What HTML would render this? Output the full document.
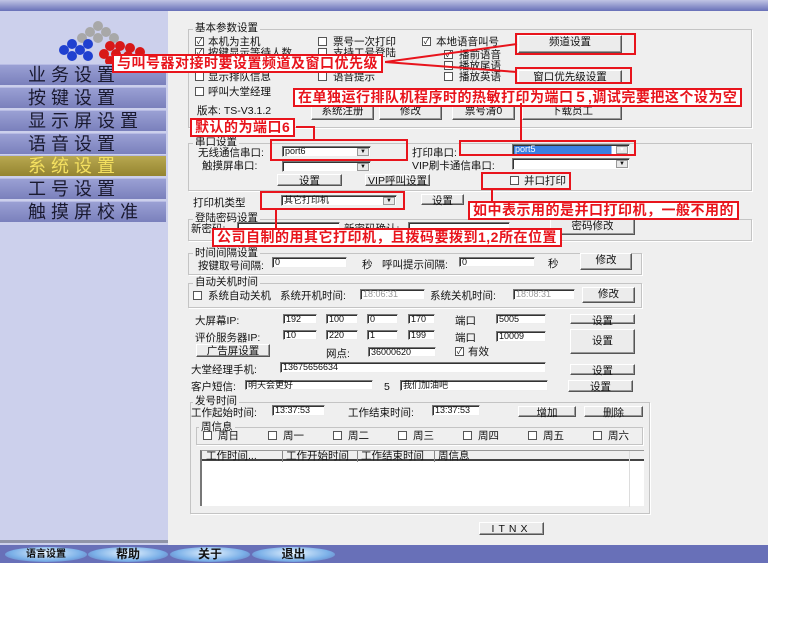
<!DOCTYPE html>
<html><head><meta charset="utf-8"><style>
*{margin:0;padding:0;box-sizing:border-box}
body{width:793px;height:622px;background:#fff;position:relative;overflow:hidden;font-family:"Liberation Sans","Noto Sans CJK SC",sans-serif;font-size:10.5px;color:#111}
div,span{position:absolute}
.t{white-space:nowrap;line-height:11px}
.b{background:#ececec;border:1px solid;border-color:#fff #555 #555 #fff;box-shadow:inset -1px -1px 0 #999;text-align:center;line-height:12px;white-space:nowrap}
.i{background:#fff;border:1px solid;border-color:#777 #eee #eee #777;box-shadow:inset 1px 1px 0 #333;padding-left:2px;line-height:9px;white-space:nowrap;font-size:9px}
.c{width:9px;height:9px;background:#fff;border:1px solid #555;font-size:8px;line-height:7px;text-align:center}
.g{border:1px solid #c4c4c4;box-shadow:1px 1px 0 #fff}
.gl{background:#efefef;padding:0 2px}
.dd{right:1px;top:1px;width:12px;height:8px;background:#e8e8e8;border:1px solid #999;font-size:6px;line-height:6px;text-align:center}
.r{border:2px solid #e8141c}
.rl{background:#fff;color:#e8141c;font-weight:bold;font-size:14px;letter-spacing:0.5px;line-height:15px;white-space:nowrap;padding:0 3px;border:2px solid #e8141c}
.m{left:0;width:166px;height:21px;background:linear-gradient(#9aa0d4,#7a80bc);border-top:1px solid #b8bce4;font-size:18px;letter-spacing:5px;padding-left:28px;line-height:20px;color:#1a1a30}
.bb{top:547px;height:15px;background:radial-gradient(ellipse at 50% 40%,#e8f4ff,#7ab0e8 60%,#5f6ab0 100%);border-radius:50%;text-align:center;font-size:12px;line-height:15px;font-weight:bold}
.red-ln{background:#e8141c}
</style></head><body>
<div style="left:0;top:0;width:768px;height:11px;background:linear-gradient(#c0c4e4,#6870b8)"></div>
<div style="left:0;top:11px;width:168px;height:534px;background:#ccd0ec"></div>
<div style="left:0;top:540px;width:168px;height:3px;background:#9094a8"></div>
<div style="left:168px;top:11px;width:600px;height:534px;background:#efefef"></div>
<div style="left:0;top:545px;width:768px;height:18px;background:#6870b8"></div>
<div class="bb" style="left:5px;width:82px;font-size:10px">语言设置</div>
<div class="bb" style="left:88px;width:80px">帮助</div>
<div class="bb" style="left:170px;width:80px">关于</div>
<div class="bb" style="left:252px;width:83px">退出</div>

<svg style="position:absolute;left:58px;top:20px" width="90" height="46" viewBox="0 0 90 46" preserveAspectRatio="none">
<g transform="scale(1)">
<g fill="#a8a8a8"><circle cx="40" cy="6" r="5"/><circle cx="32" cy="12" r="5"/><circle cx="48" cy="12" r="5"/><circle cx="40" cy="18" r="5"/><circle cx="56" cy="18" r="5"/><circle cx="24" cy="18" r="5"/></g>
<g fill="#2040d0"><circle cx="14" cy="24" r="5"/><circle cx="6" cy="30" r="5"/><circle cx="22" cy="30" r="5"/><circle cx="14" cy="36" r="5"/><circle cx="30" cy="24" r="5"/><circle cx="30" cy="36" r="5"/></g>
<g fill="#d81818"><circle cx="52" cy="26" r="5"/><circle cx="62" cy="26" r="5"/><circle cx="72" cy="28" r="5"/><circle cx="46" cy="34" r="5"/><circle cx="58" cy="34" r="5"/><circle cx="70" cy="36" r="5"/><circle cx="82" cy="32" r="5"/><circle cx="52" cy="41" r="5"/><circle cx="64" cy="41" r="5"/></g></g>
</svg>
<div class="m" style="top:64px">业务设置</div>
<div class="m" style="top:87px">按键设置</div>
<div class="m" style="top:110px">显示屏设置</div>
<div class="m" style="top:133px">语音设置</div>
<div class="m" style="top:155px;background:linear-gradient(#b8a850,#948430);color:#f4e060">系统设置</div>
<div class="m" style="top:178px">工号设置</div>
<div class="m" style="top:201px">触摸屏校准</div>

<div class="g" style="left:188px;top:29px;width:564px;height:99px"></div>
<div class="t gl" style="left:193px;top:23px">基本参数设置</div>
<div class="c" style="left:195px;top:37px">✓</div><div class="t" style="left:208px;top:37px">本机为主机</div>
<div class="c" style="left:195px;top:48px">✓</div><div class="t" style="left:208px;top:48px">按键显示等待人数</div>
<div class="c" style="left:195px;top:72px"></div><div class="t" style="left:208px;top:72px">显示排队信息</div>
<div class="c" style="left:195px;top:87px"></div><div class="t" style="left:208px;top:87px">呼叫大堂经理</div>
<div class="c" style="left:318px;top:37px"></div><div class="t" style="left:333px;top:37px">票号一次打印</div>
<div class="c" style="left:318px;top:48px"></div><div class="t" style="left:333px;top:48px">支持工号登陆</div>
<div class="c" style="left:318px;top:72px"></div><div class="t" style="left:333px;top:72px">语音提示</div>
<div class="c" style="left:422px;top:37px">✓</div><div class="t" style="left:436px;top:37px">本地语音叫号</div>
<div class="c" style="left:444px;top:50px">✓</div><div class="t" style="left:459px;top:50px">播前语音</div>
<div class="c" style="left:444px;top:61px"></div><div class="t" style="left:459px;top:61px">播放尾语</div>
<div class="c" style="left:444px;top:72px"></div><div class="t" style="left:459px;top:72px">播放英语</div>
<div class="t" style="left:197px;top:106px">版本: TS-V3.1.2</div>
<div class="b" style="left:311px;top:104px;width:63px;height:16px">系统注册</div>
<div class="b" style="left:379px;top:104px;width:63px;height:16px">修改</div>
<div class="b" style="left:452px;top:104px;width:63px;height:16px">票号清0</div>
<div class="b" style="left:522px;top:104px;width:100px;height:16px">下载员工</div>
<div class="b" style="left:518px;top:35px;width:104px;height:18px">频道设置</div>
<div class="b" style="left:518px;top:70px;width:104px;height:14px">窗口优先级设置</div>

<div class="g" style="left:188px;top:143px;width:564px;height:48px"></div>
<div class="t gl" style="left:193px;top:137px">串口设置</div>
<div class="t" style="left:198px;top:148px">无线通信串口:</div>
<div class="i" style="left:282px;top:146px;width:89px;height:11px">port6<div class="dd">▼</div></div>
<div class="t" style="left:202px;top:161px">触摸屏串口:</div>
<div class="i" style="left:282px;top:161px;width:89px;height:11px"><div class="dd">▼</div></div>
<div class="t" style="left:412px;top:148px">打印串口:</div>
<div class="i" style="left:512px;top:144px;width:118px;height:11px;background:linear-gradient(90deg,#3a80e0 85%,#fff 85%);color:#fff">port5<div class="dd">▼</div></div>
<div class="t" style="left:412px;top:161px">VIP刷卡通信串口:</div>
<div class="i" style="left:512px;top:158px;width:118px;height:12px"><div class="dd">▼</div></div>
<div class="b" style="left:277px;top:174px;width:65px;height:12px">设置</div>
<div class="b" style="left:365px;top:174px;width:65px;height:12px">VIP呼叫设置</div>
<div class="c" style="left:510px;top:176px"></div><div class="t" style="left:524px;top:176px">并口打印</div>

<div class="t" style="left:193px;top:198px">打印机类型</div>
<div class="i" style="left:281px;top:195px;width:116px;height:11px">其它打印机<div class="dd">▼</div></div>
<div class="b" style="left:421px;top:194px;width:43px;height:11px">设置</div>

<div class="g" style="left:188px;top:219px;width:564px;height:22px"></div>
<div class="t gl" style="left:193px;top:213px">登陆密码设置</div>
<div class="t" style="left:191px;top:224px">新密码:</div>
<div class="i" style="left:237px;top:222px;width:103px;height:12px"></div>
<div class="t" style="left:344px;top:224px">新密码确认:</div>
<div class="i" style="left:408px;top:222px;width:102px;height:12px"></div>
<div class="b" style="left:550px;top:219px;width:85px;height:16px">密码修改</div>

<div class="g" style="left:188px;top:253px;width:454px;height:22px"></div>
<div class="t gl" style="left:193px;top:248px">时间间隔设置</div>
<div class="t" style="left:198px;top:261px">按键取号间隔:</div>
<div class="i" style="left:272px;top:257px;width:75px;height:11px">0</div>
<div class="t" style="left:362px;top:260px">秒</div>
<div class="t" style="left:382px;top:260px">呼叫提示间隔:</div>
<div class="i" style="left:459px;top:257px;width:76px;height:10px">0</div>
<div class="t" style="left:548px;top:259px">秒</div>
<div class="b" style="left:580px;top:253px;width:52px;height:17px">修改</div>

<div class="g" style="left:188px;top:283px;width:454px;height:25px"></div>
<div class="t gl" style="left:193px;top:277px">自动关机时间</div>
<div class="c" style="left:193px;top:291px"></div><div class="t" style="left:208px;top:291px">系统自动关机</div>
<div class="t" style="left:280px;top:291px">系统开机时间:</div>
<div class="i" style="left:360px;top:289px;width:65px;height:11px;color:#999">18:06:31</div>
<div class="t" style="left:430px;top:291px">系统关机时间:</div>
<div class="i" style="left:513px;top:289px;width:62px;height:11px;color:#999">18:08:31</div>
<div class="b" style="left:582px;top:287px;width:53px;height:16px">修改</div>

<div class="t" style="left:195px;top:316px">大屏幕IP:</div>
<div class="t" style="left:195px;top:333px">评价服务器IP:</div>
<div class="i" style="left:283px;top:314px;width:34px;height:10px">192</div>
<div class="i" style="left:326px;top:314px;width:32px;height:10px">100</div>
<div class="i" style="left:367px;top:314px;width:31px;height:10px">0</div>
<div class="i" style="left:408px;top:314px;width:27px;height:10px">170</div>
<div class="i" style="left:283px;top:330px;width:34px;height:10px">10</div>
<div class="i" style="left:326px;top:330px;width:32px;height:10px">220</div>
<div class="i" style="left:367px;top:330px;width:31px;height:10px">1</div>
<div class="i" style="left:408px;top:330px;width:27px;height:10px">199</div>
<div class="t" style="left:455px;top:316px">端口</div>
<div class="t" style="left:455px;top:333px">端口</div>
<div class="i" style="left:496px;top:314px;width:50px;height:10px">5005</div>
<div class="i" style="left:496px;top:331px;width:50px;height:11px">10009</div>
<div class="b" style="left:570px;top:314px;width:65px;height:10px">设置</div>
<div class="b" style="left:570px;top:329px;width:65px;height:25px;line-height:23px">设置</div>
<div class="b" style="left:196px;top:344px;width:74px;height:13px">广告屏设置</div>
<div class="t" style="left:326px;top:349px">网点:</div>
<div class="i" style="left:368px;top:347px;width:68px;height:10px">36000620</div>
<div class="c" style="left:455px;top:347px">✓</div><div class="t" style="left:468px;top:347px">有效</div>
<div class="t" style="left:191px;top:365px">大堂经理手机:</div>
<div class="i" style="left:280px;top:362px;width:266px;height:11px">13675656634</div>
<div class="b" style="left:570px;top:364px;width:65px;height:11px">设置</div>
<div class="t" style="left:191px;top:382px">客户短信:</div>
<div class="i" style="left:245px;top:380px;width:128px;height:10px">明天会更好</div>
<div class="t" style="left:384px;top:382px">5</div>
<div class="i" style="left:400px;top:380px;width:148px;height:11px">我们加油吧</div>
<div class="b" style="left:568px;top:380px;width:65px;height:12px">设置</div>

<div class="g" style="left:190px;top:402px;width:460px;height:112px"></div>
<div class="t gl" style="left:193px;top:396px">发号时间</div>
<div class="t" style="left:191px;top:408px">工作起始时间:</div>
<div class="i" style="left:272px;top:405px;width:53px;height:11px">13:37:53</div>
<div class="t" style="left:348px;top:408px">工作结束时间:</div>
<div class="i" style="left:432px;top:405px;width:48px;height:11px">13:37:53</div>
<div class="b" style="left:518px;top:406px;width:58px;height:11px">增加</div>
<div class="b" style="left:584px;top:406px;width:59px;height:11px">删除</div>
<div class="g" style="left:196px;top:427px;width:447px;height:18px"></div>
<div class="t gl" style="left:199px;top:422px">周信息</div>
<div class="c" style="left:203px;top:431px"></div><div class="t" style="left:218px;top:431px">周日</div>
<div class="c" style="left:268px;top:431px"></div><div class="t" style="left:283px;top:431px">周一</div>
<div class="c" style="left:333px;top:431px"></div><div class="t" style="left:348px;top:431px">周二</div>
<div class="c" style="left:398px;top:431px"></div><div class="t" style="left:413px;top:431px">周三</div>
<div class="c" style="left:463px;top:431px"></div><div class="t" style="left:478px;top:431px">周四</div>
<div class="c" style="left:528px;top:431px"></div><div class="t" style="left:543px;top:431px">周五</div>
<div class="c" style="left:593px;top:431px"></div><div class="t" style="left:608px;top:431px">周六</div>
<div style="left:200px;top:450px;width:444px;height:56px;background:#fff;border-left:2px solid #777;border-top:1px solid #999">
 <div style="left:0;top:0;width:442px;height:10px;background:#efefef;border-bottom:2px solid #444"></div>
 <div class="t" style="left:4px;top:0">工作时间...</div>
 <div class="t" style="left:80px;top:0;border-left:1px solid #888;padding-left:3px">工作开始时间</div>
 <div class="t" style="left:155px;top:0;border-left:1px solid #888;padding-left:3px">工作结束时间</div>
 <div class="t" style="left:232px;top:0;border-left:1px solid #888;padding-left:3px">周信息</div>
 <div style="left:427px;top:0;width:1px;height:56px;background:#ddd"></div>
</div>
<div class="b" style="left:479px;top:522px;width:65px;height:13px;letter-spacing:4px">ITNX</div>

<div class="rl" style="left:112px;top:54px">与叫号器对接时要设置频道及窗口优先级</div>
<div class="r" style="left:515px;top:33px;width:121px;height:22px"></div>
<div class="r" style="left:515px;top:67px;width:117px;height:17px"></div>
<svg style="position:absolute;left:385px;top:40px" width="135" height="40"><path d="M0 22 L132 4 M0 22 L132 32" stroke="#e8141c" stroke-width="2" fill="none"/></svg>
<div class="rl" style="left:293px;top:88px">在单独运行排队机程序时的热敏打印为端口５,调试完要把这个设为空</div>
<div class="rl" style="left:190px;top:118px">默认的为端口6</div>
<div class="red-ln" style="left:296px;top:126px;width:18px;height:2px"></div>
<div class="red-ln" style="left:313px;top:126px;width:2px;height:14px"></div>
<div class="r" style="left:270px;top:139px;width:138px;height:22px"></div>
<div class="red-ln" style="left:520px;top:103px;width:2px;height:38px"></div>
<div class="r" style="left:459px;top:140px;width:177px;height:16px"></div>
<div class="r" style="left:481px;top:172px;width:90px;height:18px"></div>
<div class="red-ln" style="left:491px;top:190px;width:2px;height:12px"></div>
<div class="r" style="left:260px;top:191px;width:145px;height:19px"></div>
<div class="rl" style="left:468px;top:201px">如中表示用的是并口打印机，一般不用的</div>
<div class="red-ln" style="left:275px;top:209px;width:2px;height:20px"></div>
<div class="rl" style="left:212px;top:228px">公司自制的用其它打印机，且拨码要拨到1,2所在位置</div>
</body></html>
